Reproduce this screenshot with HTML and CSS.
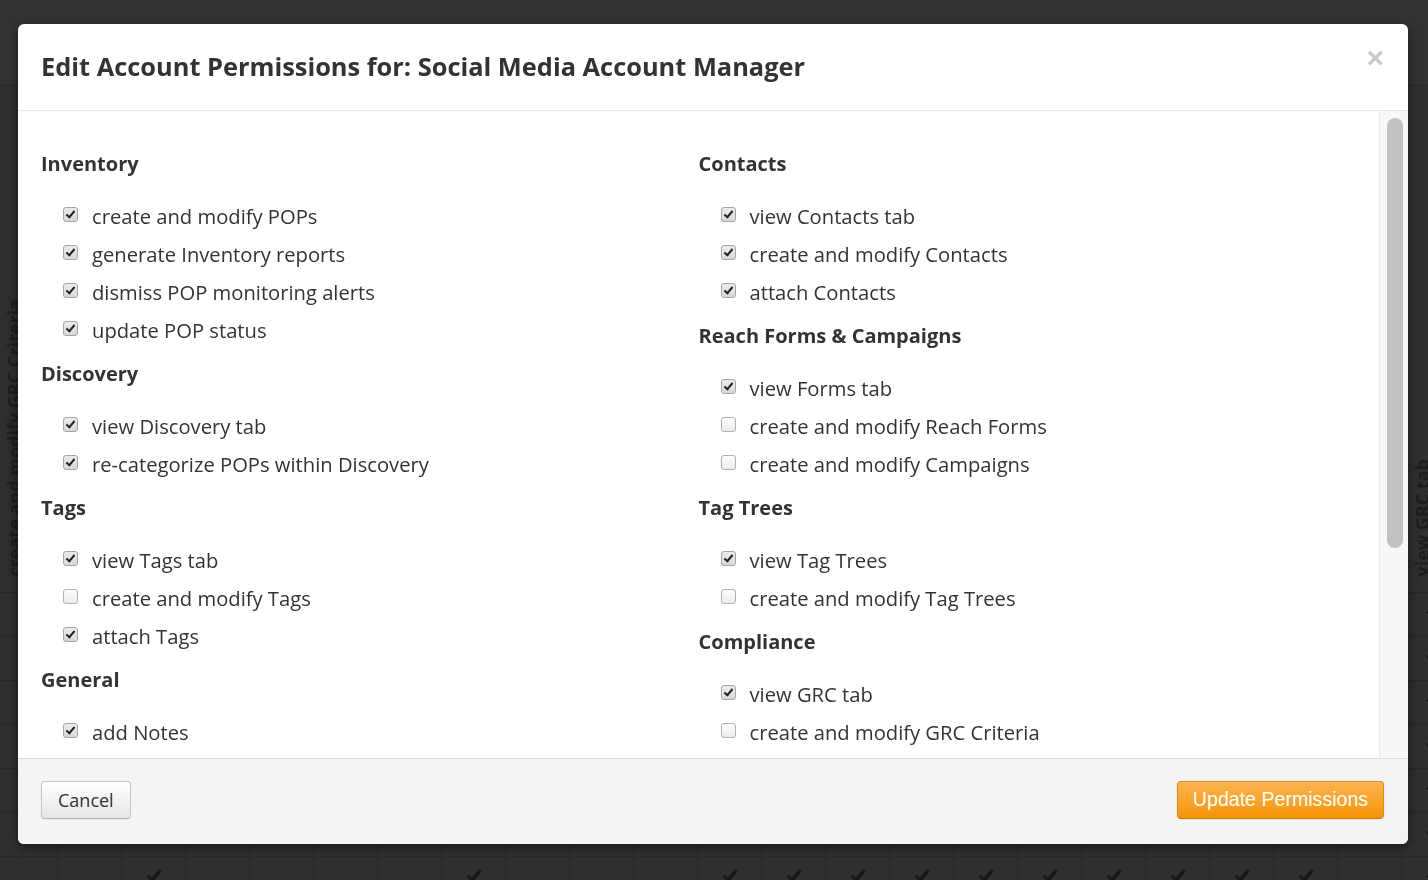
FILE: index.html
```html
<!DOCTYPE html>
<html lang="en">
<head>
    <meta charset="UTF-8">
    <meta name="viewport" content="width=device-width, initial-scale=1.0">
    <title>Account Permissions</title>
    <link rel="stylesheet" href="styles.css">
</head>
<body>

<!-- permissions matrix behind the dialog -->
<div class="topbar"></div>
<div class="matrix">
    <div class="matrix-head">
        <div class="col-label"><span>create and modify GRC Criteria</span></div>
        <div class="col-label"></div>
        <div class="col-label"></div>
        <div class="col-label"></div>
        <div class="col-label"></div>
        <div class="col-label"></div>
        <div class="col-label"></div>
        <div class="col-label"></div>
        <div class="col-label"></div>
        <div class="col-label"></div>
        <div class="col-label"></div>
        <div class="col-label"></div>
        <div class="col-label"></div>
        <div class="col-label"></div>
        <div class="col-label"></div>
        <div class="col-label"></div>
        <div class="col-label"></div>
        <div class="col-label"></div>
        <div class="col-label"></div>
        <div class="col-label"></div>
        <div class="col-label"></div>
        <div class="col-label"></div>
        <div class="col-label"><span>view GRC tab</span></div>
    </div>
    <div class="matrix-row"><i></i><i class="on"></i><i class="on"></i><i class="on"></i><i class="on"></i><i class="on"></i><i></i><i class="on"></i><i></i><i class="on"></i><i class="on"></i><i class="on"></i><i class="on"></i><i class="on"></i><i class="on"></i><i></i><i></i><i class="on"></i><i></i><i></i><i></i><i></i><i class="on"></i></div>
    <div class="matrix-row"><i></i><i class="on"></i><i class="on"></i><i></i><i class="on"></i><i class="on"></i><i class="on"></i><i class="on"></i><i class="on"></i><i class="on"></i><i class="on"></i><i class="on"></i><i class="on"></i><i class="on"></i><i class="on"></i><i class="on"></i><i class="on"></i><i class="on"></i><i class="on"></i><i></i><i></i><i></i><i class="on"></i></div>
    <div class="matrix-row"><i></i><i class="on"></i><i></i><i class="on"></i><i></i><i class="on"></i><i></i><i class="on"></i><i></i><i class="on"></i><i class="on"></i><i class="on"></i><i></i><i class="on"></i><i class="on"></i><i></i><i></i><i class="on"></i><i></i><i class="on"></i><i></i><i></i><i class="on"></i></div>
    <div class="matrix-row"><i></i><i class="on"></i><i class="on"></i><i class="on"></i><i class="on"></i><i class="on"></i><i class="on"></i><i class="on"></i><i class="on"></i><i class="on"></i><i class="on"></i><i class="on"></i><i class="on"></i><i class="on"></i><i class="on"></i><i class="on"></i><i class="on"></i><i class="on"></i><i class="on"></i><i class="on"></i><i class="on"></i><i></i><i class="on"></i></div>
    <div class="matrix-row"><i></i><i></i><i class="on"></i><i></i><i></i><i class="on"></i><i></i><i class="on"></i><i></i><i></i><i class="on"></i><i class="on"></i><i></i><i></i><i class="on"></i><i></i><i></i><i class="on"></i><i></i><i></i><i></i><i></i><i class="on"></i></div>
    <div class="matrix-row"><i></i><i class="on"></i><i class="on"></i><i class="on"></i><i class="on"></i><i class="on"></i><i class="on"></i><i class="on"></i><i class="on"></i><i class="on"></i><i class="on"></i><i class="on"></i><i class="on"></i><i class="on"></i><i class="on"></i><i class="on"></i><i class="on"></i><i class="on"></i><i class="on"></i><i class="on"></i><i></i><i></i><i class="on"></i></div>
    <div class="matrix-row"><i></i><i></i><i class="on"></i><i></i><i></i><i></i><i></i><i class="on"></i><i></i><i></i><i></i><i class="on"></i><i class="on"></i><i class="on"></i><i class="on"></i><i class="on"></i><i class="on"></i><i class="on"></i><i class="on"></i><i class="on"></i><i class="on"></i><i></i><i class="on"></i></div>
</div>

<!-- edit permissions dialog -->
<div class="modal">
    <div class="modal-header">
        <h3>Edit Account Permissions for: Social Media Account Manager</h3>
        <span class="close">&times;</span>
    </div>

    <div class="modal-main">
        <div class="modal-body">
            <div class="perm-grid">
                <div class="perm-col">
                    <div class="perm-group">
                        <h4>Inventory</h4>
                        <ul>
                            <li><span class="box on"></span>create and modify POPs</li>
                            <li><span class="box on"></span>generate Inventory reports</li>
                            <li><span class="box on"></span>dismiss POP monitoring alerts</li>
                            <li><span class="box on"></span>update POP status</li>
                        </ul>
                    </div>
                    <div class="perm-group">
                        <h4>Discovery</h4>
                        <ul>
                            <li><span class="box on"></span>view Discovery tab</li>
                            <li><span class="box on"></span>re-categorize POPs within Discovery</li>
                        </ul>
                    </div>
                    <div class="perm-group">
                        <h4>Tags</h4>
                        <ul>
                            <li><span class="box on"></span>view Tags tab</li>
                            <li><span class="box"></span>create and modify Tags</li>
                            <li><span class="box on"></span>attach Tags</li>
                        </ul>
                    </div>
                    <div class="perm-group">
                        <h4>General</h4>
                        <ul>
                            <li><span class="box on"></span>add Notes</li>
                        </ul>
                    </div>
                </div>

                <div class="perm-col">
                    <div class="perm-group">
                        <h4>Contacts</h4>
                        <ul>
                            <li><span class="box on"></span>view Contacts tab</li>
                            <li><span class="box on"></span>create and modify Contacts</li>
                            <li><span class="box on"></span>attach Contacts</li>
                        </ul>
                    </div>
                    <div class="perm-group">
                        <h4>Reach Forms &amp; Campaigns</h4>
                        <ul>
                            <li><span class="box on"></span>view Forms tab</li>
                            <li><span class="box"></span>create and modify Reach Forms</li>
                            <li><span class="box"></span>create and modify Campaigns</li>
                        </ul>
                    </div>
                    <div class="perm-group">
                        <h4>Tag Trees</h4>
                        <ul>
                            <li><span class="box on"></span>view Tag Trees</li>
                            <li><span class="box"></span>create and modify Tag Trees</li>
                        </ul>
                    </div>
                    <div class="perm-group">
                        <h4>Compliance</h4>
                        <ul>
                            <li><span class="box on"></span>view GRC tab</li>
                            <li><span class="box"></span>create and modify GRC Criteria</li>
                        </ul>
                    </div>
                </div>
            </div>
        </div>
        <div class="scroll-track"><div class="scroll-thumb"></div></div>
    </div>

    <div class="modal-footer">
        <button class="btn">Cancel</button>
        <button class="btn btn-warning">Update Permissions</button>
    </div>
</div>

</body>
</html>
```

FILE: styles.css
```css
body {
    margin: 0;
    height: 880px;
    overflow: hidden;
    background-color: #2f2f2f;
    font-family: 'Open Sans', 'Liberation Sans', Arial, sans-serif;
    color: #333;
}

/* Background page */
.topbar {
    height: 85px;
    background-color: #333;
    border-bottom: 1px solid #2a2a2a;
    box-sizing: border-box;
}
.matrix {
    margin-left: -7px;
    width: 1472px;
}
.matrix-head,
.matrix-row {
    display: grid;
    grid-template-columns: repeat(23, 64px);
}
.col-label {
    height: 507px;
    display: flex;
    flex-direction: column;
    justify-content: flex-end;
    align-items: flex-start;
    padding: 0 0 15px 11px;
    box-sizing: border-box;
}
.col-label span {
    writing-mode: vertical-rl;
    transform: rotate(180deg);
    font-size: 18px;
    line-height: 20px;
    font-weight: bold;
    color: #1d1d1d;
    white-space: nowrap;
}
.matrix-row {
    height: 44px;
    border-top: 1px solid #282828;
    box-sizing: border-box;
}
.matrix-row i {
    border-left: 1px solid #282828;
    display: flex;
    justify-content: center;
    padding-top: 10px;
    box-sizing: border-box;
    font-style: normal;
}
.matrix-row i.on::after {
    content: "";
    width: 5px;
    height: 11px;
    border: solid #151515;
    border-width: 0 3px 3px 0;
    transform: rotate(40deg);
}

/* Dialog */
.modal {
    position: fixed;
    top: 24px;
    left: 18px;
    width: 1390px;
    height: 820px;
    background-color: #fff;
    border-radius: 6px;
    box-shadow: 0 3px 12px rgba(0, 0, 0, 0.5);
    display: flex;
    flex-direction: column;
    overflow: hidden;
}
.modal-header {
    height: 87px;
    flex-shrink: 0;
    display: flex;
    align-items: center;
    justify-content: space-between;
    padding: 0 24px 0 23px;
    border-bottom: 1px solid #e6e6e6;
    box-sizing: border-box;
}
.modal-header h3 {
    margin: -3px 0 0;
    font-size: 25.4px;
    font-weight: bold;
    color: #333;
}
.close {
    align-self: flex-start;
    margin-top: 19px;
    font-size: 30px;
    line-height: 30px;
    font-weight: bold;
    color: #c9c9c9;
    font-family: 'Liberation Sans', Arial, sans-serif;
}
.modal-main {
    flex: 1;
    min-height: 0;
    display: flex;
}
.modal-body {
    flex: 1;
    overflow: hidden;
}
.scroll-track {
    width: 29px;
    padding: 7px 5px 0 7px;
    background-color: #f8f8f8;
    border-left: 1px solid #e9e9e9;
    box-sizing: border-box;
}
.scroll-thumb {
    height: 430px;
    background-color: #c2c2c2;
    border-radius: 8px;
}

.perm-grid {
    display: grid;
    grid-template-columns: 1fr 1fr;
    padding: 41px 23px 0;
}
.perm-group {
    margin-bottom: 13px;
}
.perm-group h4 {
    margin: 0 0 21px;
    font-size: 20px;
    line-height: 24px;
    font-weight: bold;
    color: #333;
}
.perm-group ul {
    list-style: none;
    margin: 0;
    padding: 0 0 0 22px;
}
.perm-group li {
    height: 38px;
    display: flex;
    align-items: center;
    font-size: 20.2px;
    color: #333;
}
.box {
    width: 15px;
    height: 15px;
    margin: -3px 14px 0 0;
    border: 1px solid #b0b0b0;
    border-radius: 3px;
    background: linear-gradient(#fdfdfd, #ebebeb);
    box-sizing: border-box;
    display: flex;
    justify-content: center;
    flex-shrink: 0;
}
.box.on {
    background: linear-gradient(#ececec, #d8d8d8);
    border-color: #a6a6a6;
}
.box.on::after {
    content: "";
    width: 3px;
    height: 7px;
    margin-top: 1px;
    border: solid #222;
    border-width: 0 2.5px 2.5px 0;
    transform: rotate(40deg);
}

.modal-footer {
    height: 86px;
    flex-shrink: 0;
    display: flex;
    align-items: center;
    justify-content: space-between;
    padding: 0 24px 4px 23px;
    background-color: #f4f4f4;
    border-top: 1px solid #dcdcdc;
    box-sizing: border-box;
}
.btn {
    height: 38px;
    padding: 0 16px;
    font-family: 'Open Sans', Arial, sans-serif;
    font-size: 18px;
    color: #333;
    background: linear-gradient(#ffffff, #e6e6e6);
    border: 1px solid #c6c6c6;
    border-bottom-color: #b3b3b3;
    border-radius: 4px;
    box-shadow: inset 0 1px 0 rgba(255, 255, 255, 0.2), 0 1px 2px rgba(0, 0, 0, 0.05);
}
.btn-warning {
    width: 207px;
    padding: 0;
    font-family: 'Liberation Sans', Arial, sans-serif;
    font-size: 19.6px;
    color: #fff;
    background: linear-gradient(#fbb450, #f89406);
    border-color: #e08a12;
    border-bottom-color: #c9780a;
}
```
